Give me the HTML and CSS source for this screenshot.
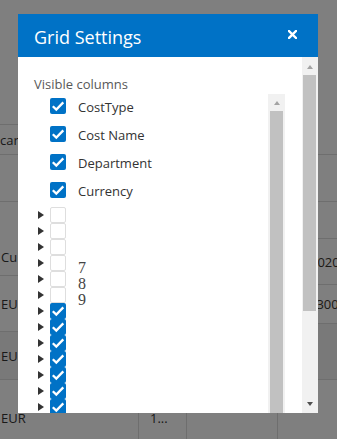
FILE: index.html
```html
<!DOCTYPE html>
<html>
<head>
<meta charset="utf-8">
<link rel="stylesheet" href="styles.css">
</head>
<body>
<div class="page">
  <div class="grid">
    <div class="col col-left">
      <div class="cell h125"></div>
      <div class="cell h30 tight">card</div>
      <div class="cell h47"></div>
      <div class="cell h74 bottom">Cu</div>
      <div class="cell h56">EU</div>
      <div class="cell h48 alt">EU</div>
    </div>
    <div class="col-mid"></div>
    <div class="col col-right">
      <div class="cell h155"></div>
      <div class="cell h47"></div>
      <div class="cell h37"></div>
      <div class="cell h46 num-a">2020</div>
      <div class="cell h39 num-b">1300</div>
      <div class="cell h56 alt"></div>
    </div>
  </div>
  <div class="bottom-row">
    <div class="bcell w138">EUR</div>
    <div class="bcell w48 pad12">1...</div>
    <div class="bcell w91"></div>
    <div class="bcell grow"></div>
  </div>
</div>

<div class="backdrop"></div>

<div class="dialog">
  <div class="dialog-header">
    <h2 class="dialog-title">Grid Settings</h2>
    <svg class="close" viewBox="0 0 9 9" width="9" height="9"><path d="M1 1L8 8M8 1L1 8" stroke="#fff" stroke-width="2.4" stroke-linecap="square"/></svg>
  </div>
  <div class="dialog-body">
    <div class="body-content">
      <p class="section-label">Visible columns</p>
      <div class="list">
        <div class="list-items">
          <div class="col-row"><span class="cb on"><svg viewBox="0 0 16 16" width="16" height="16"><polyline points="2.8,8.2 6.3,11.6 13.3,4.4" fill="none" stroke="#fff" stroke-width="2.3"/></svg></span><span class="label">CostType</span></div>
          <div class="col-row"><span class="cb on"><svg viewBox="0 0 16 16" width="16" height="16"><polyline points="2.8,8.2 6.3,11.6 13.3,4.4" fill="none" stroke="#fff" stroke-width="2.3"/></svg></span><span class="label">Cost Name</span></div>
          <div class="col-row"><span class="cb on"><svg viewBox="0 0 16 16" width="16" height="16"><polyline points="2.8,8.2 6.3,11.6 13.3,4.4" fill="none" stroke="#fff" stroke-width="2.3"/></svg></span><span class="label">Department</span></div>
          <div class="col-row"><span class="cb on"><svg viewBox="0 0 16 16" width="16" height="16"><polyline points="2.8,8.2 6.3,11.6 13.3,4.4" fill="none" stroke="#fff" stroke-width="2.3"/></svg></span><span class="label">Currency</span></div>
          <div class="tree">
            <div class="tree-row"><span class="caret"></span><span class="cb"></span><span class="tree-label"></span></div>
            <div class="tree-row"><span class="caret"></span><span class="cb"></span><span class="tree-label"></span></div>
            <div class="tree-row"><span class="caret"></span><span class="cb"></span><span class="tree-label"></span></div>
            <div class="tree-row"><span class="caret"></span><span class="cb"></span><span class="tree-label">7</span></div>
            <div class="tree-row"><span class="caret"></span><span class="cb"></span><span class="tree-label">8</span></div>
            <div class="tree-row"><span class="caret"></span><span class="cb"></span><span class="tree-label">9</span></div>
            <div class="tree-row"><span class="caret"></span><span class="cb on"><svg viewBox="0 0 16 16" width="16" height="16"><polyline points="2.8,8.2 6.3,11.6 13.3,4.4" fill="none" stroke="#fff" stroke-width="2.3"/></svg></span><span class="tree-label"></span></div>
            <div class="tree-row"><span class="caret"></span><span class="cb on"><svg viewBox="0 0 16 16" width="16" height="16"><polyline points="2.8,8.2 6.3,11.6 13.3,4.4" fill="none" stroke="#fff" stroke-width="2.3"/></svg></span><span class="tree-label"></span></div>
            <div class="tree-row"><span class="caret"></span><span class="cb on"><svg viewBox="0 0 16 16" width="16" height="16"><polyline points="2.8,8.2 6.3,11.6 13.3,4.4" fill="none" stroke="#fff" stroke-width="2.3"/></svg></span><span class="tree-label"></span></div>
            <div class="tree-row"><span class="caret"></span><span class="cb on"><svg viewBox="0 0 16 16" width="16" height="16"><polyline points="2.8,8.2 6.3,11.6 13.3,4.4" fill="none" stroke="#fff" stroke-width="2.3"/></svg></span><span class="tree-label"></span></div>
            <div class="tree-row"><span class="caret"></span><span class="cb on"><svg viewBox="0 0 16 16" width="16" height="16"><polyline points="2.8,8.2 6.3,11.6 13.3,4.4" fill="none" stroke="#fff" stroke-width="2.3"/></svg></span><span class="tree-label"></span></div>
            <div class="tree-row"><span class="caret"></span><span class="cb on"><svg viewBox="0 0 16 16" width="16" height="16"><polyline points="2.8,8.2 6.3,11.6 13.3,4.4" fill="none" stroke="#fff" stroke-width="2.3"/></svg></span><span class="tree-label"></span></div>
            <div class="tree-row"><span class="caret"></span><span class="cb on"><svg viewBox="0 0 16 16" width="16" height="16"><polyline points="2.8,8.2 6.3,11.6 13.3,4.4" fill="none" stroke="#fff" stroke-width="2.3"/></svg></span><span class="tree-label"></span></div>
            <div class="tree-row"><span class="caret"></span><span class="cb on"><svg viewBox="0 0 16 16" width="16" height="16"><polyline points="2.8,8.2 6.3,11.6 13.3,4.4" fill="none" stroke="#fff" stroke-width="2.3"/></svg></span><span class="tree-label"></span></div>
          </div>
        </div>
        <div class="vscroll">
          <div class="sb-btn"><span class="arrow-up"></span></div>
          <div class="sb-thumb grow-thumb"></div>
        </div>
      </div>
    </div>
    <div class="oscroll">
      <div class="sb-btn top"><span class="arrow-up"></span></div>
      <div class="sb-track"><div class="sb-thumb fixed-thumb"></div></div>
      <div class="sb-btn bottom"><span class="arrow-down"></span></div>
    </div>
  </div>
</div>
</body>
</html>
```

FILE: styles.css
```css
* { box-sizing: border-box; }

body {
  margin: 0;
  width: 337px;
  height: 439px;
  overflow: hidden;
  position: relative;
  background: #fff;
  font-family: "Open Sans", "Liberation Sans", sans-serif;
}

/* page behind the modal */
.page {
  display: flex;
  flex-direction: column;
  height: 439px;
  font-size: 13px;
  color: #333;
}
.grid { display: flex; height: 380px; flex: none; }
.col { display: flex; flex-direction: column; }
.col-left { width: 60px; }
.col-mid { flex: 1; }
.col-right { width: 37px; }

.cell {
  border-bottom: 1px solid #ddd;
  display: flex;
  align-items: center;
  white-space: nowrap;
  line-height: 20px;
  padding-left: 1px;
  overflow: hidden;
}
.cell.tight { padding-left: 0; }
.cell.bottom { align-items: flex-end; padding-bottom: 8px; }
.cell.alt { background: #f3f3f3; }
.cell.num-a { padding-left: 10px; color: #3a342c; }
.cell.num-b { padding-left: 9px; color: #3a342c; }
.h125 { height: 125px; }
.h30 { height: 30px; }
.h47 { height: 47px; }
.h74 { height: 74px; }
.h56 { height: 56px; }
.h48 { height: 48px; }
.h155 { height: 155px; }
.h37 { height: 37px; }
.h46 { height: 46px; }
.h39 { height: 39px; }

.bottom-row { display: flex; flex: 1; }
.bcell {
  border-right: 1px solid #ddd;
  padding-top: 28px;
  padding-left: 1px;
  line-height: 20px;
  white-space: nowrap;
}
.w138 { width: 139px; }
.w48 { width: 48px; }
.w91 { width: 91px; }
.grow { flex: 1; border-right: 0; }
.pad12 { padding-left: 11px; }

.backdrop {
  position: absolute;
  inset: 0;
  background: rgba(0, 0, 0, 0.5);
}

/* dialog */
.dialog {
  position: absolute;
  left: 18px;
  top: 14px;
  width: 300px;
  height: 399px;
  background: #fff;
  display: flex;
  flex-direction: column;
}
.dialog-header {
  height: 43px;
  flex: none;
  background: #0072c6;
  color: #fff;
  display: flex;
  align-items: center;
  justify-content: space-between;
  padding: 2px 21px 0 16px;
}
.dialog-title {
  margin: 0;
  font-size: 18px;
  font-weight: 400;
  line-height: 24px;
}
.close { display: block; margin-top: -4px; }

.dialog-body { flex: 1; display: flex; min-height: 0; }
.body-content {
  flex: 1;
  padding: 18px 17px 0 16px;
  display: flex;
  flex-direction: column;
  overflow: hidden;
  min-width: 0;
}
.section-label {
  margin: 0 0 1px;
  font-size: 13px;
  line-height: 18px;
  color: #595959;
}
.list { flex: 1; display: flex; min-height: 0; overflow: hidden; }
.list-items { flex: 1; min-width: 0; }

.col-row {
  display: flex;
  align-items: flex-start;
  height: 28px;
  padding: 4px 0 0 16px;
}
.label {
  margin-left: 12px;
  padding-top: 1px;
  font-size: 13px;
  line-height: 16px;
  color: #333;
  white-space: nowrap;
}

.cb {
  display: block;
  flex: none;
  width: 16px;
  height: 16px;
  border-radius: 2px;
  border: 1px solid #dedede;
  background: #fff;
}
.cb.on { background: #0072c6; border: 0; }
.cb svg { display: block; }

.tree { margin-top: 1px; }
.tree-row {
  display: flex;
  align-items: center;
  height: 16px;
  padding-left: 4px;
}
.caret {
  width: 0;
  height: 0;
  border-left: 6px solid #333;
  border-top: 4px solid transparent;
  border-bottom: 4px solid transparent;
  margin-right: 6px;
}
.tree-label {
  align-self: flex-start;
  margin: 4px 0 0 12px;
  font-family: "Liberation Serif", serif;
  font-size: 16px;
  line-height: normal;
  color: #444;
  white-space: nowrap;
}

/* scrollbars */
.vscroll {
  width: 17px;
  flex: none;
  background: #f1f1f1;
  display: flex;
  flex-direction: column;
}
.oscroll {
  width: 16px;
  flex: none;
  background: #f1f1f1;
  display: flex;
  flex-direction: column;
}
.sb-btn {
  height: 17px;
  flex: none;
  display: flex;
  align-items: center;
  justify-content: center;
}
.sb-btn.top { padding-top: 3px; }
.sb-btn.bottom { padding-bottom: 1px; }
.arrow-up {
  width: 0;
  height: 0;
  border-left: 3.5px solid transparent;
  border-right: 3.5px solid transparent;
  border-bottom: 4px solid #a3a3a3;
}
.arrow-down {
  width: 0;
  height: 0;
  border-left: 3.5px solid transparent;
  border-right: 3.5px solid transparent;
  border-top: 4px solid #505050;
}
.sb-track { flex: 1; padding: 1px 2px 0 1px; }
.sb-thumb { background: #c1c1c1; }
.fixed-thumb { height: 236px; }
.grow-thumb { flex: 1; margin: 0 2px; }
```
